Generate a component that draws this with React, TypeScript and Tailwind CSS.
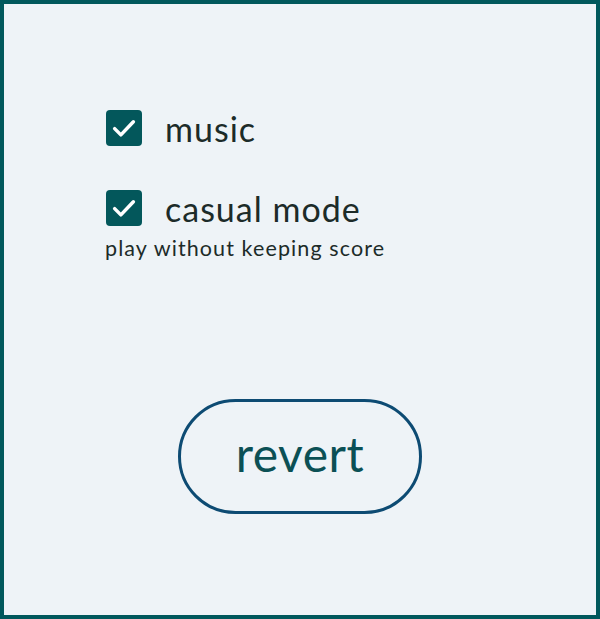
import { useState } from "react";

function Check({ checked, onClick }: { checked: boolean; onClick: () => void }) {
  return (
    <button
      onClick={onClick}
      className="w-9 h-9 rounded-[4px] bg-[#03575b] flex items-center justify-center shrink-0"
    >
      {checked && (
        <svg width="30" height="30" viewBox="0 0 24 24" fill="none">
          <path
            d="M4.5 12.5l5 5L19.5 7"
            stroke="#ffffff"
            strokeWidth="2.8"
            strokeLinecap="round"
            strokeLinejoin="round"
          />
        </svg>
      )}
    </button>
  );
}

export default function App() {
  const [music, setMusic] = useState(true);
  const [casual, setCasual] = useState(true);

  return (
    <div
      className="w-[600px] h-[619px] bg-[#eef3f7] border-4 border-[#00585c] flex flex-col"
      style={{ fontFamily: "Lato, 'Open Sans', sans-serif" }}
    >
      {/* Options */}
      <div className="pl-[102px] pt-[106px] flex flex-col">
        <div className="flex items-center gap-[23px]">
          <Check checked={music} onClick={() => setMusic(!music)} />
          <span className="text-[34px] leading-none text-[#1c2b29] tracking-[1px] pt-[1px]">music</span>
        </div>

        <div className="flex items-center gap-[23px] mt-[44px]">
          <Check checked={casual} onClick={() => setCasual(!casual)} />
          <span className="text-[34px] leading-none text-[#1c2b29] tracking-[1px] pt-[1px]">casual mode</span>
        </div>
        <p className="text-[21.5px] leading-none text-[#1c2b29] mt-[12px] -ml-[1px] tracking-[1.1px]">
          play without keeping score
        </p>
      </div>

      {/* Actions */}
      <div className="flex justify-center mt-[139px]">
        <button className="w-[244px] h-[115px] rounded-full border-[3px] border-[#0d4b73] text-[48px] text-[#0b5055] tracking-[0.5px] flex items-center justify-center pb-1">
          revert
        </button>
      </div>
    </div>
  );
}
